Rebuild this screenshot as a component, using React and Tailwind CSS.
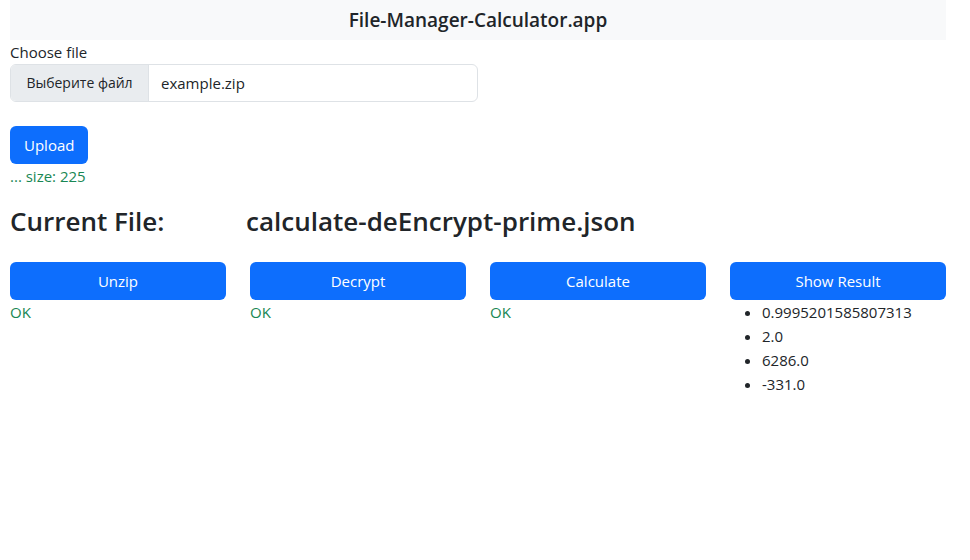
import React from "react";

const results = ["0.9995201585807313", "2.0", "6286.0", "-331.0"];

const actions = [
  { label: "Unzip", status: "OK" },
  { label: "Decrypt", status: "OK" },
  { label: "Calculate", status: "OK" },
];

export default function App() {
  return (
    <div
      className="min-h-screen bg-white text-[#212529] text-base leading-6"
      style={{ fontFamily: '"Open Sans", "Noto Sans", sans-serif' }}
    >
      <div className="px-[10px] w-[956px]">
        {/* header */}
        <div className="bg-[#f8f9fa] h-10 flex items-center justify-center">
          <h1 className="text-[19px] font-semibold">File-Manager-Calculator.app</h1>
        </div>

        {/* upload form */}
        <div>
          <label className="block text-[15px] leading-6">Choose file</label>
          <div className="flex w-[468px] h-[38px] border border-[#dee2e6] rounded-md overflow-hidden text-[15px]">
            <span className="bg-[#e9ecef] border-r border-[#dee2e6] px-3 flex items-center justify-center w-[138px] shrink-0 whitespace-nowrap text-[14px]">
              Выберите файл
            </span>
            <span className="px-3 flex items-center">example.zip</span>
          </div>
          <button className="mt-6 h-[38px] px-[14px] rounded-md bg-[#0d6efd] text-white text-[15px]">
            Upload
          </button>
          <div className="text-[#198754] text-[15px] leading-6">... size: 225</div>
        </div>

        {/* current file */}
        <div className="grid grid-cols-4 gap-x-6 mt-4 text-[26px] font-semibold leading-[34px]">
          <h2>Current File:</h2>
          <h2 className="col-span-3 -ml-1">calculate-deEncrypt-prime.json</h2>
        </div>

        {/* actions */}
        <div className="grid grid-cols-4 gap-x-6 mt-6 text-[15px]">
          {actions.map((a) => (
            <div key={a.label}>
              <button className="w-full h-[38px] rounded-md bg-[#0d6efd] text-white">{a.label}</button>
              <div className="text-[#198754] leading-6">{a.status}</div>
            </div>
          ))}
          <div>
            <button className="w-full h-[38px] rounded-md bg-[#0d6efd] text-white">Show Result</button>
            <ul className="list-disc pl-8">
              {results.map((r) => (
                <li key={r} className="leading-6">{r}</li>
              ))}
            </ul>
          </div>
        </div>
      </div>
    </div>
  );
}
